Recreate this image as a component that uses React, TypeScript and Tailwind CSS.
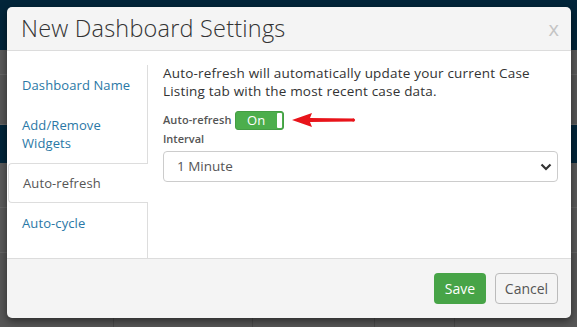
import React from "react";

function Arrow() {
  return (
    <svg width="64" height="16" viewBox="0 0 64 16" className="block">
      <polygon points="0,8 20,1 18,6 62,6.5 62,9.5 18,10 20,15" fill="#e8141a" />
      <circle cx="61.5" cy="8" r="1.6" fill="#e8141a" />
    </svg>
  );
}

function Chevron() {
  return (
    <svg width="12" height="8" viewBox="0 0 12 8" className="block">
      <path d="M1.5 1.5 L6 6 L10.5 1.5" fill="none" stroke="#333" strokeWidth="2.2" />
    </svg>
  );
}

export default function App() {
  const font = { fontFamily: '"Open Sans", "Liberation Sans", sans-serif' };
  return (
    <div className="relative w-[577px] h-[327px] overflow-hidden bg-[#585858]" style={font}>
      {/* dimmed page behind */}
      <div className="flex flex-col h-full">
        <div className="h-[50px] bg-[#02253a]" />
        <div className="h-[25px] bg-[#5a5a5a] border-b border-[#666]" />
        <div className="h-[50px] bg-[#575757] border-b border-[#666]" />
        <div className="h-[38px] bg-[#02253a]" />
        <div className="h-[45px] bg-[#5a5a5a] border-b border-[#666]" />
        <div className="h-[45px] bg-[#5a5a5a] border-b border-[#666]" />
        <div className="flex-1 bg-[#575757] flex flex-col justify-end">
          <div className="flex h-[10px]">
            <div className="w-[114px] border-r border-[#4a4a4a]" />
            <div className="w-[139px] border-r border-[#4a4a4a]" />
            <div className="w-[122px] border-r border-[#4a4a4a]" />
            <div className="w-[80px] border-r border-[#4a4a4a]" />
          </div>
        </div>
      </div>

      {/* modal */}
      <div className="absolute left-[7px] top-[7px] w-[564px] h-[311px] rounded-[5px] bg-[#f4f4f4] shadow-[0_3px_9px_rgba(0,0,0,0.5)] flex flex-col overflow-hidden">
        <div className="h-[44px] flex items-center justify-between pl-[14px] pr-[12px] border-b border-[#dcdcdc]">
          <span className="text-[23.5px] text-[#333] font-light tracking-[0.2px]">New Dashboard Settings</span>
          <span className="text-[20px] text-[#c4c4c4] leading-none">x</span>
        </div>
        <div className="h-[207px] bg-white flex">
          <div className="w-[141px] flex flex-col pt-[14px] text-[13px] leading-[18px]">
            <div className="pl-[15px] pr-[10px] py-[11px] text-[#2a78a6] border-r border-[#ddd] tracking-[0.1px]">Dashboard Name</div>
            <div className="pl-[15px] pr-[10px] py-[11px] text-[#2a78a6] border-r border-[#ddd] tracking-[0.1px]">Add/Remove<br />Widgets</div>
            <div className="ml-[1px] pl-[14px] pr-[10px] py-[10px] text-[#555] border border-r-0 border-[#ddd] rounded-l-[4px] tracking-[0.1px]">Auto-refresh</div>
            <div className="pl-[15px] pr-[10px] py-[11px] text-[#2a78a6] border-r border-[#ddd] tracking-[0.1px]">Auto-cycle</div>
            <div className="flex-1 border-r border-[#ddd]" />
          </div>
          <div className="flex-1 pl-[15px] pr-[13px] pt-[13px] text-[#333]">
            <p className="text-[13.5px] leading-[18px] tracking-[0.2px] whitespace-nowrap">
              Auto-refresh will automatically update your current Case
              <br />
              Listing tab with the most recent case data.
            </p>
            <div className="mt-[10px] flex items-center h-[20px]">
              <span className="text-[11px] font-semibold text-[#555] tracking-[0.1px]">Auto-refresh</span>
              <div className="ml-[3px] w-[49px] h-[19px] rounded-[3px] bg-[#4cae4c] border border-[#449d44] flex items-center">
                <span className="flex-1 text-center text-[13px] text-white leading-none">On</span>
                <span className="w-[5px] h-[15px] bg-white rounded-[1px] mr-[1px]" />
              </div>
              <div className="ml-[8px]">
                <Arrow />
              </div>
            </div>
            <div className="mt-[0px] text-[11px] font-semibold text-[#555] leading-[18px]">Interval</div>
            <div className="mt-[3px] h-[31px] border border-[#ccc] rounded-[4px] flex items-center justify-between pl-[13px] pr-[5px]">
              <span className="text-[13.5px] text-[#555]">1 Minute</span>
              <Chevron />
            </div>
          </div>
        </div>
        <div className="flex-1 border-t border-[#dcdcdc] flex items-center justify-end gap-[9px] pr-[13px]">
          <button className="h-[31px] w-[52px] rounded-[4px] bg-[#47a447] text-white text-[14px]">Save</button>
          <button className="h-[31px] w-[63px] rounded-[4px] border border-[#bbb] text-[#555] text-[14px]">Cancel</button>
        </div>
      </div>
    </div>
  );
}
